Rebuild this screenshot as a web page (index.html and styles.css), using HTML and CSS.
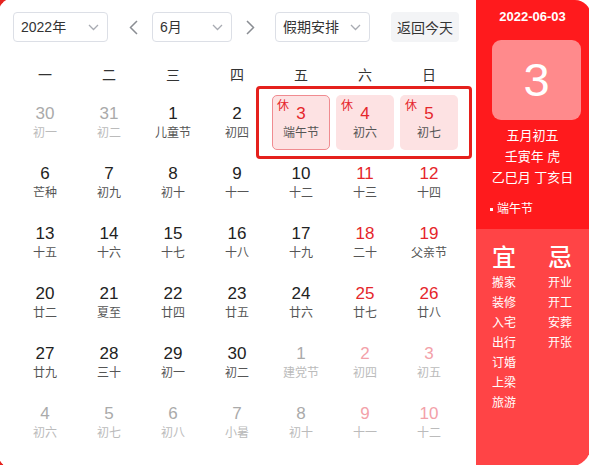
FILE: index.html
```html
<!DOCTYPE html>
<html lang="zh-CN">
<head>
<meta charset="utf-8">
<title>万年历</title>
<link rel="stylesheet" href="styles.css">
</head>
<body>
<div class="widget">
  <div class="calendar">
    <div class="toolbar">
      <div class="select sel-year"><span>2022年</span><svg class="caret" width="11" height="7" viewBox="0 0 11 7"><polyline points="1,1 5.5,5.5 10,1" fill="none" stroke="#a8abb2" stroke-width="1.3"/></svg></div>
      <div class="arrow arrow-prev"><svg width="9" height="15" viewBox="0 0 9 15"><polyline points="8,1 1.5,7.5 8,14" fill="none" stroke="#8a8d93" stroke-width="1.5"/></svg></div>
      <div class="select sel-month"><span>6月</span><svg class="caret" width="11" height="7" viewBox="0 0 11 7"><polyline points="1,1 5.5,5.5 10,1" fill="none" stroke="#a8abb2" stroke-width="1.3"/></svg></div>
      <div class="arrow arrow-next"><svg width="9" height="15" viewBox="0 0 9 15"><polyline points="1,1 7.5,7.5 1,14" fill="none" stroke="#8a8d93" stroke-width="1.5"/></svg></div>
      <div class="select sel-holiday"><span>假期安排</span><svg class="caret" width="11" height="7" viewBox="0 0 11 7"><polyline points="1,1 5.5,5.5 10,1" fill="none" stroke="#a8abb2" stroke-width="1.3"/></svg></div>
      <div class="today-btn">返回今天</div>
    </div>
    <div class="weekdays">
      <span>一</span><span>二</span><span>三</span><span>四</span><span>五</span><span>六</span><span>日</span>
    </div>
    <div class="grid">
      <div class="cell other"><div class="inner"><b>30</b><i>初一</i></div></div>
      <div class="cell other"><div class="inner"><b>31</b><i>初二</i></div></div>
      <div class="cell"><div class="inner"><b>1</b><i>儿童节</i></div></div>
      <div class="cell"><div class="inner"><b>2</b><i>初四</i></div></div>
      <div class="cell rest holiday selected"><div class="inner"><em>休</em><b>3</b><i>端午节</i></div></div>
      <div class="cell rest holiday"><div class="inner"><em>休</em><b>4</b><i>初六</i></div></div>
      <div class="cell rest holiday"><div class="inner"><em>休</em><b>5</b><i>初七</i></div></div>

      <div class="cell"><div class="inner"><b>6</b><i>芒种</i></div></div>
      <div class="cell"><div class="inner"><b>7</b><i>初九</i></div></div>
      <div class="cell"><div class="inner"><b>8</b><i>初十</i></div></div>
      <div class="cell"><div class="inner"><b>9</b><i>十一</i></div></div>
      <div class="cell"><div class="inner"><b>10</b><i>十二</i></div></div>
      <div class="cell rest"><div class="inner"><b>11</b><i>十三</i></div></div>
      <div class="cell rest"><div class="inner"><b>12</b><i>十四</i></div></div>

      <div class="cell"><div class="inner"><b>13</b><i>十五</i></div></div>
      <div class="cell"><div class="inner"><b>14</b><i>十六</i></div></div>
      <div class="cell"><div class="inner"><b>15</b><i>十七</i></div></div>
      <div class="cell"><div class="inner"><b>16</b><i>十八</i></div></div>
      <div class="cell"><div class="inner"><b>17</b><i>十九</i></div></div>
      <div class="cell rest"><div class="inner"><b>18</b><i>二十</i></div></div>
      <div class="cell rest"><div class="inner"><b>19</b><i>父亲节</i></div></div>

      <div class="cell"><div class="inner"><b>20</b><i>廿二</i></div></div>
      <div class="cell"><div class="inner"><b>21</b><i>夏至</i></div></div>
      <div class="cell"><div class="inner"><b>22</b><i>廿四</i></div></div>
      <div class="cell"><div class="inner"><b>23</b><i>廿五</i></div></div>
      <div class="cell"><div class="inner"><b>24</b><i>廿六</i></div></div>
      <div class="cell rest"><div class="inner"><b>25</b><i>廿七</i></div></div>
      <div class="cell rest"><div class="inner"><b>26</b><i>廿八</i></div></div>

      <div class="cell"><div class="inner"><b>27</b><i>廿九</i></div></div>
      <div class="cell"><div class="inner"><b>28</b><i>三十</i></div></div>
      <div class="cell"><div class="inner"><b>29</b><i>初一</i></div></div>
      <div class="cell"><div class="inner"><b>30</b><i>初二</i></div></div>
      <div class="cell other"><div class="inner"><b>1</b><i>建党节</i></div></div>
      <div class="cell other rest"><div class="inner"><b>2</b><i>初四</i></div></div>
      <div class="cell other rest"><div class="inner"><b>3</b><i>初五</i></div></div>

      <div class="cell other"><div class="inner"><b>4</b><i>初六</i></div></div>
      <div class="cell other"><div class="inner"><b>5</b><i>初七</i></div></div>
      <div class="cell other"><div class="inner"><b>6</b><i>初八</i></div></div>
      <div class="cell other"><div class="inner"><b>7</b><i>小暑</i></div></div>
      <div class="cell other"><div class="inner"><b>8</b><i>初十</i></div></div>
      <div class="cell other rest"><div class="inner"><b>9</b><i>十一</i></div></div>
      <div class="cell other rest"><div class="inner"><b>10</b><i>十二</i></div></div>
    </div>
    <div class="highlight-box"></div>
  </div>
  <div class="panel">
    <div class="panel-top">
      <div class="p-date">2022-06-03</div>
      <div class="p-day">3</div>
      <div class="p-lunar">五月初五</div>
      <div class="p-lunar">壬寅年 虎</div>
      <div class="p-lunar">乙巳月 丁亥日</div>
      <div class="p-fest"><span class="dot"></span>端午节</div>
    </div>
    <div class="panel-bottom">
      <div class="yj">
        <div class="yj-title">宜</div>
        <div class="yj-item">搬家</div>
        <div class="yj-item">装修</div>
        <div class="yj-item">入宅</div>
        <div class="yj-item">出行</div>
        <div class="yj-item">订婚</div>
        <div class="yj-item">上梁</div>
        <div class="yj-item">旅游</div>
      </div>
      <div class="yj">
        <div class="yj-title">忌</div>
        <div class="yj-item">开业</div>
        <div class="yj-item">开工</div>
        <div class="yj-item">安葬</div>
        <div class="yj-item">开张</div>
      </div>
    </div>
  </div>
</div>
</body>
</html>
```

FILE: styles.css
```css
html, body {
  margin: 0;
  padding: 0;
  background: #fff;
  overflow: hidden;
}
body {
  font-family: "Liberation Sans", "Noto Sans CJK SC", sans-serif;
  color: #333;
}
.widget {
  position: relative;
  width: 591px;
  height: 467px;
  display: flex;
}
.widget::before {
  content: "";
  position: absolute;
  left: -7px;
  top: -7px;
  bottom: -7px;
  width: 300px;
  border: 5px solid #e5231f;
  border-right: none;
  border-radius: 21px 0 0 21px;
  pointer-events: none;
  z-index: 3;
}
.calendar {
  position: relative;
  width: 476px;
  flex: none;
  padding: 12px 0 0 13px;
  box-sizing: border-box;
}
.toolbar {
  display: flex;
  align-items: center;
  height: 30px;
}
.select {
  box-sizing: border-box;
  height: 30px;
  border: 1px solid #dcdfe6;
  border-radius: 4px;
  display: flex;
  align-items: center;
  justify-content: space-between;
  padding: 0 8px 0 7px;
  font-size: 14px;
  color: #333;
}
.select span { line-height: 20px; }
.sel-year { width: 95px; }
.sel-month { width: 80px; }
.sel-holiday { width: 95px; }
.arrow {
  width: 20px;
  height: 30px;
  display: flex;
  align-items: center;
  justify-content: center;
}
.arrow-prev { margin: 0 9px 0 15px; }
.arrow-next { margin: 0 15px 0 8px; }
.today-btn {
  margin-left: 21px;
  height: 30px;
  width: 68px;
  box-sizing: border-box;
  background: #f3f4f6;
  border-radius: 4px;
  font-size: 14px;
  color: #333;
  display: flex;
  align-items: center;
  justify-content: center;
}
.weekdays {
  margin-top: 18px;
  display: grid;
  grid-template-columns: repeat(7, 64px);
  height: 30px;
  line-height: 30px;
  font-size: 14px;
  color: #333;
  text-align: center;
}
.grid {
  margin-top: 3px;
  display: grid;
  grid-template-columns: repeat(7, 64px);
  grid-auto-rows: 60px;
}
.cell {
  padding: 2px 3px 3px;
  box-sizing: border-box;
}
.inner {
  position: relative;
  height: 100%;
  box-sizing: border-box;
  border-radius: 5px;
  display: flex;
  flex-direction: column;
  align-items: center;
  justify-content: center;
  padding-bottom: 1px;
}
.inner b {
  font-weight: normal;
  font-size: 17px;
  line-height: 22px;
  color: #222;
}
.inner i {
  font-style: normal;
  font-size: 12px;
  line-height: 16px;
  color: #555;
}
.rest .inner b { color: #e5262b; }
.other .inner b { color: #aaa; }
.other .inner i { color: #bbb; }
.other.rest .inner b { color: #f3a1a9; }
.holiday .inner { background: #fde2e3; }
.selected .inner { border: 1.5px solid #f08b90; }
.inner em {
  position: absolute;
  left: 5px;
  top: 4px;
  font-style: normal;
  font-size: 12px;
  line-height: 14px;
  color: #e5262b;
}
.selected .inner em { left: 4px; top: 3px; }
.highlight-box {
  position: absolute;
  left: 256px;
  top: 86px;
  width: 216px;
  height: 73px;
  box-sizing: border-box;
  border: 3px solid #e5201c;
  border-radius: 4px;
  pointer-events: none;
}
.panel {
  width: 115px;
  flex: none;
  display: flex;
  flex-direction: column;
  border-radius: 0 16px 22px 0;
  overflow: hidden;
  color: #fff;
}
.panel-top {
  height: 229px;
  flex: none;
  background: #ff1a1d;
  box-sizing: border-box;
  padding-top: 8px;
}
.p-date {
  font-size: 13px;
  font-weight: bold;
  line-height: 18px;
  width: 113px;
  text-align: center;
}
.p-day {
  margin: 14px 0 0 16px;
  width: 89px;
  height: 80px;
  border-radius: 9px;
  background: #ff8a8c;
  font-size: 47px;
  line-height: 80px;
  text-align: center;
  color: #fff;
}
.p-lunar {
  width: 113px;
  text-align: center;
  font-size: 13px;
  line-height: 21px;
}
.p-day + .p-lunar { margin-top: 5px; }
.p-fest {
  margin: 14px 0 0 14px;
  font-size: 12px;
  line-height: 14px;
  display: flex;
  align-items: center;
}
.dot {
  width: 3px;
  height: 3px;
  background: #fff;
  margin-right: 4px;
}
.panel-bottom {
  flex: 1;
  background: #ff4446;
  display: flex;
  padding: 16px 0 0 16px;
  gap: 31px;
}
.yj {
  display: flex;
  flex-direction: column;
  width: 25px;
}
.yj-title {
  font-size: 24px;
  line-height: 26px;
  margin-bottom: 2px;
  font-weight: 500;
}
.yj-item {
  font-size: 12px;
  line-height: 20px;
  white-space: nowrap;
}
```
